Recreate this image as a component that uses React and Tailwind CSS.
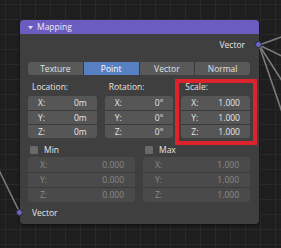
import React from 'react';

const tabs = ['Texture', 'Point', 'Vector', 'Normal'];

const columns = [
  { label: 'Location:', values: ['0m', '0m', '0m'] },
  { label: 'Rotation:', values: ['0°', '0°', '0°'] },
  { label: 'Scale:', values: ['1.000', '1.000', '1.000'] },
];

const limits = [
  { label: 'Min', values: ['0.000', '0.000', '0.000'] },
  { label: 'Max', values: ['1.000', '1.000', '1.000'] },
];

const axes = ['X:', 'Y:', 'Z:'];

// Stacked number fields, Blender style
const FieldStack = ({ values, disabled, rowClass, padClass }) => (
  <div className="flex flex-col rounded-[3px] overflow-hidden">
    {values.map((v, i) => (
      <div
        key={i}
        className={`flex items-center justify-between ${rowClass} ${padClass} ${
          i > 0 ? 'border-t border-[#3a3a3a]' : ''
        } ${disabled ? 'bg-[#4a4a4a] text-[#8a8a8a]' : 'bg-[#565656] text-[#e6e6e6]'}`}
      >
        <span>{axes[i]}</span>
        <span>{v}</span>
      </div>
    ))}
  </div>
);

const Socket = ({ className }) => (
  <div
    className={`absolute w-[7px] h-[7px] rounded-full bg-[#6a63c9] border border-[#2a2a2a] ${className}`}
  />
);

export default function App() {
  return (
    <div className="relative w-[281px] h-[248px] overflow-hidden bg-[#1e1e1e] bg-[linear-gradient(to_right,#292929_1px,transparent_1px),linear-gradient(to_bottom,#292929_1px,transparent_1px)] bg-[size:15px_15px] bg-[position:5px_4px] font-['Open_Sans',sans-serif] text-[8.5px] leading-[12px]">
      {/* wires */}
      <svg className="absolute inset-0" width="281" height="248">
        <g stroke="#8c8c8c" strokeWidth="1.6" fill="none" opacity="0.85">
          <line x1="20" y1="213" x2="-6" y2="160" />
          <line x1="259" y1="45" x2="284" y2="36" />
          <line x1="259" y1="45" x2="284" y2="57" />
          <line x1="259" y1="45" x2="284" y2="84" />
          <line x1="259" y1="45" x2="284" y2="118" />
        </g>
      </svg>

      {/* node */}
      <div className="absolute left-[20px] top-[20px] w-[239px] h-[204px] rounded-[4px] bg-[#3f3f3f] shadow-[0_1px_3px_rgba(0,0,0,0.6)] text-[#e6e6e6]">
        <div className="flex items-center h-[14px] rounded-t-[4px] bg-[#6a5cc1] pl-[8px] gap-[4px]">
          <svg width="5" height="5" viewBox="0 0 5 5" className="mt-[1px]">
            <path d="M0 1 L5 1 L2.5 4.5 Z" fill="#dcdcf0" />
          </svg>
          <span className="text-[#ececf5]">Mapping</span>
        </div>

        <div className="flex items-center justify-end h-[22px] pr-[14px]">Vector</div>

        <div className="px-[8px] pr-[9px] pt-[6px]">
          <div className="flex h-[13px] rounded-[3px] overflow-hidden">
            {tabs.map((t, i) => (
              <div
                key={t}
                className={`flex-1 flex items-center justify-center ${
                  i > 0 ? 'border-l border-[#3a3a3a]' : ''
                } ${t === 'Point' ? 'bg-[#5680c2] text-white' : 'bg-[#595959] text-[#e0e0e0]'}`}
              >
                {t}
              </div>
            ))}
          </div>

          <div className="grid grid-cols-3 gap-x-[8px]">
            {columns.map((c) => (
              <div key={c.label} className="flex flex-col">
                <div className="pl-[4px] pt-[6px] pb-[3px]">{c.label}</div>
                <FieldStack values={c.values} rowClass="h-[14px]" padClass="px-[10px]" />
              </div>
            ))}
          </div>

          <div className="grid grid-cols-2 gap-x-[8px]">
            {limits.map((l) => (
              <div key={l.label} className="flex flex-col">
                <div className="flex items-center gap-[6px] pl-[2px] h-[19px] pt-[5px]">
                  <div className="w-[8px] h-[8px] rounded-[1.5px] bg-[#6a6a6a]" />
                  <span>{l.label}</span>
                </div>
                <FieldStack values={l.values} disabled rowClass="h-[15px]" padClass="pl-[12px] pr-[11px]" />
              </div>
            ))}
          </div>
        </div>

        <div className="flex items-center h-[22px] pl-[12px]">Vector</div>

        <Socket className="left-[235px] top-[21px]" />
        <Socket className="left-[-4px] top-[189px]" />

        {/* highlight */}
        <div className="absolute left-[155px] top-[59px] w-[82px] h-[66px] border-4 border-[#e0232b]" />
      </div>
    </div>
  );
}
